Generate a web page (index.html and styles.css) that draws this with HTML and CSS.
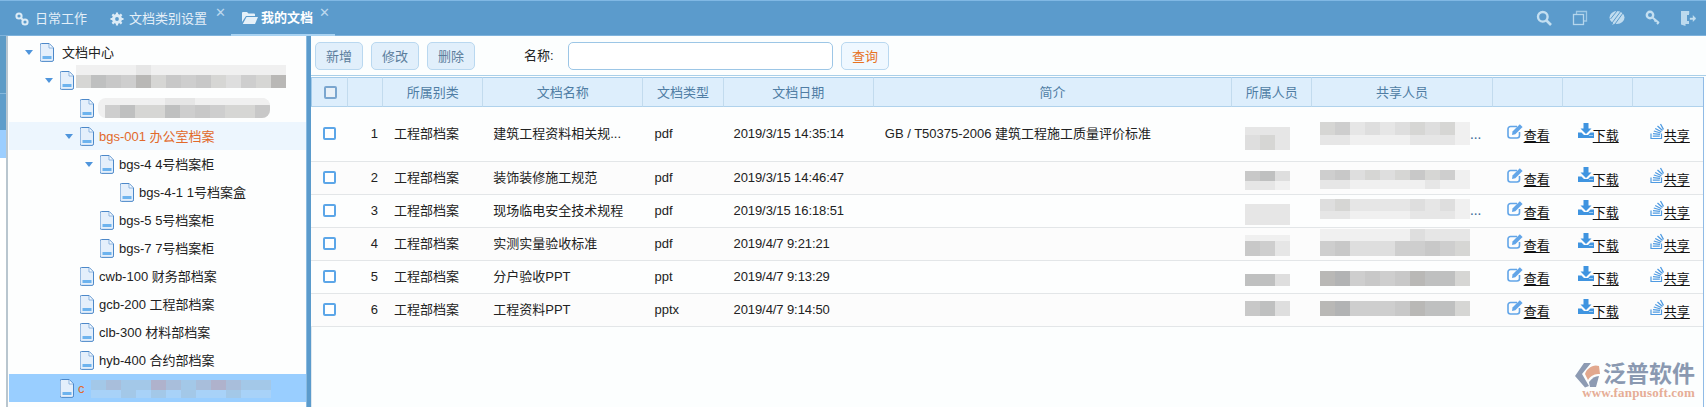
FILE: index.html
```html
<!DOCTYPE html>
<html lang="zh-CN">
<head>
<meta charset="utf-8">
<title>我的文档</title>
<link rel="stylesheet" href="styles.css">
</head>
<body>
<svg class="defs" aria-hidden="true">
  <symbol id="doc" viewBox="0 0 14 19">
    <path d="M1.5.5h7.7l4.3 4.4v12a1.5 1.5 0 0 1-1.5 1.5h-10.500a1.500 1.500 0 0 1-1.500-1.500v-14.900a1.500 1.500 0 0 1 1.500-1.500z" fill="#e4effb" stroke="#4c88c9"/>
    <path d="M9 1v4h4" fill="#f7fbff" stroke="#8db5e0"/>
    <rect x="2.500" y="13" width="9" height="3" fill="#6db3ee"/>
  </symbol>
  <symbol id="edit" viewBox="0 0 17 16">
    <path d="M12.500 9v3.500a2.500 2.500 0 0 1-2.500 2.500H3.500A2.500 2.500 0 0 1 1 12.500V6a2.500 2.500 0 0 1 2.500-2.500H10" fill="none" stroke="#62a5e8" stroke-width="1.600"/>
    <path d="M5.500 8.500 12.800 1.200l2.800 2.800-7.300 7.300-3.300.6z" fill="#62a5e8"/>
  </symbol>
  <symbol id="down" viewBox="0 0 16 15">
    <path d="M5.500 0h5v5.500h3L8 11 2.500 5.500h3z" fill="#3f94e0"/>
    <path d="M0 9.500h3.500L6 12h4l2.500-2.500H16V15H0z" fill="#3f94e0"/>
    <path d="M11.500 12.500h1M13.500 12.500h1" stroke="#fff"/>
  </symbol>
  <symbol id="share" viewBox="0 0 14 16">
    <path d="M1 10.500v5h10.500v-5" fill="none" stroke="#4f9be2" stroke-width="1.200"/>
    <path d="M2.800 13.200h7M3 10.600l7 .7M3.800 8l6.800 2M5.200 5.500l6.200 3.300M7.500 3l5 4.600M10.500 1l3 5.500" fill="none" stroke="#4f9be2" stroke-width="1.300"/>
  </symbol>
</svg>

<header class="topbar">
  <nav class="tabs">
    <div class="tab tab-first">
      <svg class="tab-icon" viewBox="0 0 14 14"><g fill="none" stroke="#dcebf6" stroke-width="2"><circle cx="4" cy="4" r="2.600"/><circle cx="10" cy="10" r="2.600"/><path d="M5.500 5.500l3 3"/></g></svg>
      <span>日常工作</span>
    </div>
    <div class="tab tab-second">
      <svg class="tab-icon" viewBox="0 0 14 14"><circle cx="7" cy="7" r="3.500" fill="none" stroke="#dcebf6" stroke-width="3"/><path d="M7 .5v13M.5 7h13M2.400 2.400l9.200 9.200M11.600 2.400l-9.200 9.200" stroke="#dcebf6" stroke-width="2.200"/><circle cx="7" cy="7" r="1.900" fill="#5b9bcc"/></svg>
      <span>文档类别设置</span>
      <span class="close">✕</span>
    </div>
    <div class="tab tab-active">
      <svg class="tab-icon tab-icon-wide" viewBox="0 0 16 13"><path d="M0 2a1 1 0 0 1 1-1h4l1.500 1.500H12a1 1 0 0 1 1 1V5H4L0 11z" fill="#e6f1f9"/><path d="M4.500 6H16l-3 7H0.800z" fill="#e6f1f9"/></svg>
      <span>我的文档</span>
      <span class="close">✕</span>
    </div>
  </nav>
  <div class="tools">
    <svg class="tool" viewBox="0 0 16 16"><circle cx="6.800" cy="6.800" r="4.800" fill="none" stroke="#c3dff1" stroke-width="2.400"/><path d="M10.500 10.500 15 15" stroke="#c3dff1" stroke-width="2.600"/></svg>
    <svg class="tool" viewBox="0 0 16 16"><path d="M4.500 4V1.500h10v9.500H11.500" fill="none" stroke="#9fc9e6" stroke-width="1.300"/><rect x="1.500" y="4.500" width="10" height="10" fill="none" stroke="#b5d6ec" stroke-width="1.300"/></svg>
    <svg class="tool tool-chat" viewBox="0 0 16 16"><ellipse cx="8" cy="7.500" rx="7.500" ry="6.500" fill="#c0dcef"/><path d="M3 15l2-3 2 1z" fill="#c0dcef"/><path d="M3 13 12 1M6 14l8-11M1.500 9 8 1" stroke="#5b9bcc" stroke-width="1"/></svg>
    <svg class="tool tool-key" viewBox="0 0 16 16"><circle cx="5" cy="5" r="3.200" fill="none" stroke="#c3dff1" stroke-width="2.400"/><path d="M7.500 7.500 14 13M11 10l-1.500 1.500M13.500 12.500 12 14" stroke="#c3dff1" stroke-width="2"/></svg>
    <svg class="tool" viewBox="0 0 16 16"><path d="M1 1h8v4H7v6h2v3H5.500v2L1 14.500z" fill="#bcdaee"/><path d="M9 1v3M10 8h3V5.500L16 8.500l-3 3V9.500h-3z" fill="#c3dff1" stroke="#c3dff1" stroke-width=".4"/></svg>
  </div>
</header>

<main class="layout">
  <div class="strip">
    <div class="strip-a"></div>
    <div class="strip-b"></div>
    <div class="strip-c"></div>
    <div class="strip-d"></div>
  </div>

  <aside class="tree">
    <div class="node l0"><i class="arrow"></i><svg class="doc"><use href="#doc"/></svg><span>文档中心</span></div>
    <div class="node l1"><i class="arrow"></i><svg class="doc"><use href="#doc"/></svg>
      <div class="mos tree-m1">
        <b class="tier h10"><i class="s0"></i><i class="s0"></i><i class="s0"></i><i class="s0"></i><i class="s1"></i><i class="s0"></i><i class="s0"></i><i class="s0"></i><i class="s0"></i><i class="s0"></i><i class="s0"></i><i class="s0"></i><i class="s0"></i><i class="s0"></i></b>
        <b class="tier h13"><i class="s3"></i><i class="s6"></i><i class="s5"></i><i class="s4"></i><i class="s7"></i><i class="s3"></i><i class="s5"></i><i class="s4"></i><i class="s5"></i><i class="s3"></i><i class="s2"></i><i class="s4"></i><i class="s3"></i><i class="s7"></i></b>
      </div>
    </div>
    <div class="node l2"><svg class="doc"><use href="#doc"/></svg>
      <div class="mos tree-m2">
        <b class="tier h7"><i class="s0"></i><i class="s0"></i><i class="s0"></i><i class="s0"></i><i class="s1"></i><i class="s1"></i><i class="s0"></i><i class="s0"></i><i class="s0"></i><i class="s0"></i><i class="s0"></i></b>
        <b class="tier h13"><i class="s4"></i><i class="s6"></i><i class="s3"></i><i class="s3"></i><i class="s6"></i><i class="s4"></i><i class="s5"></i><i class="s4"></i><i class="s3"></i><i class="s3"></i><i class="s5"></i></b>
      </div>
    </div>
    <div class="node l2 current"><i class="arrow"></i><svg class="doc"><use href="#doc"/></svg><span>bgs-001 办公室档案</span></div>
    <div class="node l3"><i class="arrow"></i><svg class="doc"><use href="#doc"/></svg><span>bgs-4 4号档案柜</span></div>
    <div class="node l4"><svg class="doc"><use href="#doc"/></svg><span>bgs-4-1 1号档案盒</span></div>
    <div class="node l3"><svg class="doc"><use href="#doc"/></svg><span>bgs-5 5号档案柜</span></div>
    <div class="node l3"><svg class="doc"><use href="#doc"/></svg><span>bgs-7 7号档案柜</span></div>
    <div class="node l2"><svg class="doc"><use href="#doc"/></svg><span>cwb-100 财务部档案</span></div>
    <div class="node l2"><svg class="doc"><use href="#doc"/></svg><span>gcb-200 工程部档案</span></div>
    <div class="node l2"><svg class="doc"><use href="#doc"/></svg><span>clb-300 材料部档案</span></div>
    <div class="node l2"><svg class="doc"><use href="#doc"/></svg><span>hyb-400 合约部档案</span></div>
    <div class="node l1 selected"><svg class="doc"><use href="#doc"/></svg><span class="cut">c</span>
      <div class="mos tree-m3">
        <b class="tier h10"><i class="b1"></i><i class="b2"></i><i class="b1"></i><i class="b1"></i><i class="b3"></i><i class="b2"></i><i class="b1"></i><i class="b2"></i><i class="b3"></i><i class="b2"></i><i class="b1"></i><i class="b1"></i></b>
        <b class="tier h8"><i class="b0"></i><i class="b0"></i><i class="b1"></i><i class="b0"></i><i class="b1"></i><i class="b0"></i><i class="b1"></i><i class="b0"></i><i class="b0"></i><i class="b1"></i><i class="b0"></i><i class="b0"></i></b>
      </div>
    </div>
  </aside>

  <div class="splitter"></div>

  <section class="content">
    <div class="toolbar">
      <button class="btn">新增</button>
      <button class="btn">修改</button>
      <button class="btn">删除</button>
      <label class="field-label" for="q">名称:</label>
      <input class="search" id="q" type="text">
      <button class="btn btn-query">查询</button>
    </div>
    <div class="grid-wrap">
      <table class="grid">
        <colgroup>
          <col class="c-check"><col class="c-no"><col class="c-cat"><col class="c-name"><col class="c-type"><col class="c-date"><col class="c-desc"><col class="c-owner"><col class="c-shared"><col class="c-act"><col class="c-act"><col class="c-act">
        </colgroup>
        <thead>
          <tr><th><i class="check check-head"></i></th><th></th><th>所属别类</th><th>文档名称</th><th>文档类型</th><th>文档日期</th><th>简介</th><th>所属人员</th><th>共享人员</th><th></th><th></th><th></th></tr>
        </thead>
        <tbody>
          <tr class="tall">
            <td class="mid"><i class="check"></i></td><td class="num">1</td><td>工程部档案</td><td class="tight">建筑工程资料相关规...</td><td>pdf</td><td class="date">2019/3/15 14:35:14</td><td>GB / T50375-2006 建筑工程施工质量评价标准</td>
            <td class="rel"><div class="mos own o1"><b class="tier h8"><i class="s1"></i><i class="s1"></i><i class="s1"></i></b><b class="tier h15"><i class="s2"></i><i class="s3"></i><i class="s1"></i></b></div></td>
            <td class="rel"><div class="mos shr w1"><b class="tier h13"><i class="s3"></i><i class="s4"></i><i class="s1"></i><i class="s2"></i><i class="s1"></i><i class="s2"></i><i class="s3"></i><i class="s2"></i><i class="s3"></i><i class="s0"></i></b><b class="tier h10"><i class="s1"></i><i class="s1"></i><i class="s0"></i><i class="s0"></i><i class="s0"></i><i class="s0"></i><i class="s1"></i><i class="s1"></i><i class="s1"></i><i class="s0"></i></b></div><em class="dots d1">...</em></td>
            <td class="act"><a><svg class="i-edit"><use href="#edit"/></svg><u>查看</u></a></td><td class="act"><a><svg class="i-down"><use href="#down"/></svg><u>下载</u></a></td><td class="act"><a><svg class="i-share"><use href="#share"/></svg><u>共享</u></a></td>
          </tr>
          <tr class="even">
            <td class="mid"><i class="check"></i></td><td class="num">2</td><td>工程部档案</td><td class="tight">装饰装修施工规范</td><td>pdf</td><td class="date">2019/3/15 14:46:47</td><td></td>
            <td class="rel"><div class="mos own o2"><b class="tier h10"><i class="s5"></i><i class="s6"></i><i class="s2"></i></b><b class="tier h9"><i class="s1"></i><i class="s1"></i><i class="s0"></i></b></div></td>
            <td class="rel"><div class="mos shr w2"><b class="tier h10"><i class="s4"></i><i class="s5"></i><i class="s2"></i><i class="s3"></i><i class="s2"></i><i class="s3"></i><i class="s5"></i><i class="s3"></i><i class="s4"></i><i class="s0"></i></b><b class="tier h9"><i class="s1"></i><i class="s1"></i><i class="s0"></i><i class="s0"></i><i class="s0"></i><i class="s0"></i><i class="s0"></i><i class="s1"></i><i class="s0"></i><i class="s0"></i></b></div></td>
            <td class="act"><a><svg class="i-edit"><use href="#edit"/></svg><u>查看</u></a></td><td class="act"><a><svg class="i-down"><use href="#down"/></svg><u>下载</u></a></td><td class="act"><a><svg class="i-share"><use href="#share"/></svg><u>共享</u></a></td>
          </tr>
          <tr>
            <td class="mid"><i class="check"></i></td><td class="num">3</td><td>工程部档案</td><td class="tight">现场临电安全技术规程</td><td>pdf</td><td class="date">2019/3/15 16:18:51</td><td></td>
            <td class="rel"><div class="mos own o3"><b class="tier h21"><i class="s1"></i><i class="s1"></i><i class="s1"></i></b></div></td>
            <td class="rel"><div class="mos shr w3"><b class="tier h12"><i class="s2"></i><i class="s3"></i><i class="s1"></i><i class="s1"></i><i class="s1"></i><i class="s1"></i><i class="s2"></i><i class="s1"></i><i class="s2"></i><i class="s0"></i></b><b class="tier h8"><i class="s1"></i><i class="s1"></i><i class="s0"></i><i class="s0"></i><i class="s0"></i><i class="s0"></i><i class="s1"></i><i class="s1"></i><i class="s1"></i><i class="s0"></i></b></div><em class="dots d3">...</em></td>
            <td class="act"><a><svg class="i-edit"><use href="#edit"/></svg><u>查看</u></a></td><td class="act"><a><svg class="i-down"><use href="#down"/></svg><u>下载</u></a></td><td class="act"><a><svg class="i-share"><use href="#share"/></svg><u>共享</u></a></td>
          </tr>
          <tr class="even">
            <td class="mid"><i class="check"></i></td><td class="num">4</td><td>工程部档案</td><td class="tight">实测实量验收标准</td><td>pdf</td><td class="date">2019/4/7 9:21:21</td><td></td>
            <td class="rel"><div class="mos own o4"><b class="tier h6"><i class="s0"></i><i class="s0"></i><i class="s0"></i></b><b class="tier h15"><i class="s5"></i><i class="s4"></i><i class="s1"></i></b></div></td>
            <td class="rel"><div class="mos shr w4"><b class="tier h12"><i class="s0"></i><i class="s0"></i><i class="s0"></i><i class="s0"></i><i class="s0"></i><i class="s0"></i><i class="s2"></i><i class="s1"></i><i class="s1"></i><i class="s1"></i></b><b class="tier h15"><i class="s4"></i><i class="s5"></i><i class="s2"></i><i class="s2"></i><i class="s2"></i><i class="s4"></i><i class="s4"></i><i class="s5"></i><i class="s4"></i><i class="s3"></i></b></div></td>
            <td class="act"><a><svg class="i-edit"><use href="#edit"/></svg><u>查看</u></a></td><td class="act"><a><svg class="i-down"><use href="#down"/></svg><u>下载</u></a></td><td class="act"><a><svg class="i-share"><use href="#share"/></svg><u>共享</u></a></td>
          </tr>
          <tr>
            <td class="mid"><i class="check"></i></td><td class="num">5</td><td>工程部档案</td><td class="tight">分户验收PPT</td><td>ppt</td><td class="date">2019/4/7 9:13:29</td><td></td>
            <td class="rel"><div class="mos own o5"><b class="tier h12"><i class="s6"></i><i class="s6"></i><i class="s2"></i></b></div></td>
            <td class="rel"><div class="mos shr w5"><b class="tier h15"><i class="s7"></i><i class="s8"></i><i class="s4"></i><i class="s5"></i><i class="s4"></i><i class="s5"></i><i class="s7"></i><i class="s6"></i><i class="s6"></i><i class="s3"></i></b></div></td>
            <td class="act"><a><svg class="i-edit"><use href="#edit"/></svg><u>查看</u></a></td><td class="act"><a><svg class="i-down"><use href="#down"/></svg><u>下载</u></a></td><td class="act"><a><svg class="i-share"><use href="#share"/></svg><u>共享</u></a></td>
          </tr>
          <tr class="even">
            <td class="mid"><i class="check"></i></td><td class="num">6</td><td>工程部档案</td><td class="tight">工程资料PPT</td><td>pptx</td><td class="date">2019/4/7 9:14:50</td><td></td>
            <td class="rel"><div class="mos own o6"><b class="tier h15"><i class="s5"></i><i class="s6"></i><i class="s2"></i></b></div></td>
            <td class="rel"><div class="mos shr w6"><b class="tier h15"><i class="s7"></i><i class="s8"></i><i class="s4"></i><i class="s4"></i><i class="s4"></i><i class="s5"></i><i class="s7"></i><i class="s6"></i><i class="s6"></i><i class="s3"></i></b></div></td>
            <td class="act"><a><svg class="i-edit"><use href="#edit"/></svg><u>查看</u></a></td><td class="act"><a><svg class="i-down"><use href="#down"/></svg><u>下载</u></a></td><td class="act"><a><svg class="i-share"><use href="#share"/></svg><u>共享</u></a></td>
          </tr>
        </tbody>
      </table>
      <div class="watermark">
        <svg class="wm-icon" viewBox="0 0 26 25"><path d="M9 0h7L7 11l7 12-4 1.500L0 13z" fill="#8d9bb3"/><path d="M10 11C12 5 18 1 24 3l1 8c-5 0-9 1-12 6z" fill="#e2a88e"/><path d="M14 19c3-4 6-6 10-6l-3 11h-6z" fill="#8d9bb3"/></svg>
        <div class="wm-text">
          <strong>泛普软件</strong>
          <small>www.fanpusoft.com</small>
        </div>
      </div>
    </div>
  </section>
</main>
</body>
</html>
```

FILE: styles.css
```css
* { box-sizing: border-box; }
html, body { margin: 0; padding: 0; }
body {
  width: 1706px;
  height: 407px;
  overflow: hidden;
  background: #fcfefe;
  color: #222;
  font: 13px/1 "Liberation Sans", "Noto Sans CJK SC", sans-serif;
}
.defs { position: absolute; width: 0; height: 0; }

/* top bar */
.topbar {
  height: 36px;
  display: flex;
  justify-content: space-between;
  align-items: center;
  background: #5b9bcc;
  border-top: 1px solid #80b8e4;
  border-bottom: 1px solid #7fb3dc;
}
.tabs { display: flex; height: 100%; }
.tab {
  display: flex;
  align-items: center;
  position: relative;
  color: #e4eff8;
  height: 36px;
  margin-top: -1px;
  padding-top: 1px;
}
.tab-first { width: 102px; padding-left: 15px; }
.tab-second { width: 129px; padding-left: 8px; }
.tab-active {
  width: 104px;
  padding-left: 11px;
  color: #fff;
  font-weight: 700;
  border-bottom: 2px solid #a9d3f2;
}
.tab-icon { width: 14px; height: 14px; margin-right: 6px; flex: none; }
.tab-second .tab-icon { margin-right: 5px; }
.tab-icon-wide { width: 16px; height: 13px; margin-right: 3px; }
.close {
  position: absolute;
  top: 6px;
  right: 5px;
  font-size: 13px;
  font-weight: 400;
  color: #bcd8ee;
}
.tools { display: flex; gap: 20px; padding-right: 10px; }
.tool { width: 16px; height: 16px; display: block; }
.tool-chat { margin-left: 1px; }
.tool-key { margin-right: -1px; }

/* layout */
.layout { display: flex; height: 371px; }
.strip {
  width: 8px;
  flex: none;
  display: flex;
  flex-direction: column;
  border-right: 2px solid #b9c6cf;
}
.strip-a { height: 58px; background: #5d9bc6; border-bottom: 1px solid #86b8dc; }
.strip-b { height: 36px; background: #5f9dca; }
.strip-c { height: 28px; background: #9bceff; }
.strip-d { flex: 1; background: #fff; }

/* tree */
.tree {
  width: 298px;
  flex: none;
  padding-top: 2px;
  padding-left: 1px;
  background: #fdfefe;
}
.node {
  height: 28px;
  display: flex;
  align-items: center;
  position: relative;
  color: #222;
}
.l0 { padding-left: 31px; }
.l1 { padding-left: 51px; }
.l2 { padding-left: 71px; }
.l3 { padding-left: 91px; }
.l4 { padding-left: 111px; }
.current { background: #edf6fe; color: #e2692a; }
.selected { background: #99ceff; }
.cut { color: #e2692a; margin-left: -1px; }
.doc { width: 14px; height: 19px; margin-right: 5px; flex: none; }
.l0 .doc { margin-right: 8px; }
.arrow {
  position: absolute;
  margin-left: -15px;
  width: 0;
  height: 0;
  border-left: 4px solid transparent;
  border-right: 4px solid transparent;
  border-top: 5px solid #4f95dc;
}
.l0 .arrow { left: 31px; }
.l1 .arrow { left: 51px; }
.l2 .arrow { left: 71px; }
.l3 .arrow { left: 91px; }

/* mosaics: the blurred-out parts of the screenshot */
.mos {
  position: absolute;
  display: flex;
  flex-direction: column;
  font-style: normal;
  background: #fff;
}
.tier { display: flex; }
.tier i { width: 15px; display: block; }
.h6 { height: 6px; } .h7 { height: 7px; } .h8 { height: 8px; } .h9 { height: 9px; }
.h10 { height: 10px; } .h12 { height: 12px; } .h13 { height: 13px; }
.h15 { height: 15px; } .h21 { height: 21px; }
.s0 { background: #f0f0f0; } .s1 { background: #e6e6e6; } .s2 { background: #dedede; }
.s3 { background: #d6d6d4; } .s4 { background: #cecece; } .s5 { background: #c8c8c8; }
.s6 { background: #bfc0c0; } .s7 { background: #b9b8b6; } .s8 { background: #b2b3b4; }
.b0 { background: #a8d2f8; } .b1 { background: #a3c8e8; } .b2 { background: #a8bedb; } .b3 { background: #afb2cc; }
.tree-m1 { left: 67px; top: -1px; border-radius: 6px 0 0 12px; }
.tree-m2 { left: 89px; top: 4px; padding-left: 7px; background: #f0f0f0; border-radius: 8px; overflow: hidden; }
.tree-m3 { left: 82px; top: 6px; background: transparent; }

/* content */
.splitter {
  width: 5px;
  flex: none;
  background: #5b9bcc;
  border-left: 1px solid #8bbbe0;
}
.content { flex: 1; min-width: 0; }
.toolbar {
  height: 40px;
  display: flex;
  align-items: flex-start;
  padding: 6px 0 0 4px;
  border-bottom: 1px solid #a9cfe8;
}
.btn {
  width: 48px;
  height: 28px;
  margin-right: 8px;
  padding: 0;
  font: inherit;
  color: #5b7d9c;
  background: #e1effb;
  border: 1px solid #b9d8f0;
  border-radius: 5px;
}
.btn-query { color: #e8721f; background: #eff8ff; margin: 0; }
.field-label { width: 85px; padding: 7px 0 0 41px; line-height: 14px; color: #222; white-space: nowrap; }
.search {
  width: 265px;
  height: 28px;
  margin-right: 8px;
  background: #fff;
  border: 1px solid #9cc6e6;
  border-radius: 5px;
  outline: 0;
}
.grid-wrap {
  position: relative;
  height: 330px;
  margin-top: 1px;
  width: 1393px;
  border-right: 1px solid #8fbae6;
  border-left: 1px solid #dfe8ee;
}
.grid {
  border-collapse: separate;
  border-spacing: 0;
  table-layout: fixed;
  width: 1392px;
  margin-left: -1px;
}
.c-check { width: 37px; }
.c-no { width: 35px; }
.c-cat { width: 100px; }
.c-name { width: 160px; }
.c-type { width: 80px; }
.c-date { width: 150px; }
.c-desc { width: 358px; }
.c-owner { width: 80px; }
.c-shared { width: 180px; }
.c-act { width: 70px; }
.grid th {
  height: 30px;
  padding: 0;
  font-weight: 400;
  color: #4f7da4;
  text-align: center;
  background: #ddeefc;
  border-top: 1px solid #a3cbea;
  border-bottom: 1px solid #b0d2ec;
  border-right: 1px solid #c2dbee;
}
.grid th:first-child { border-left: 1px solid #a3cbea; }
.grid th:last-child { border-right: 0; }
.grid td {
  height: 33px;
  padding: 0 0 2px 11px;
  white-space: nowrap;
  border-bottom: 1px solid #e3e6e8;
  background: #fdfefe;
}
.grid .tall td { height: 55px; }
.grid .even td { background: #fcfcfc; }
.grid td.mid { padding: 0 0 2px 12px; }
.grid td.num { padding: 0 5px 2px 0; text-align: right; }
.grid td.tight { padding-left: 10px; }
.grid td.date { padding-left: 10px; letter-spacing: -.09px; }
.grid td.rel { position: relative; padding: 0; }
.check {
  display: block;
  width: 13px;
  height: 13px;
  background: #fff;
  border: 2px solid #5ca6e8;
  border-radius: 2px;
}
.check-head { margin-left: 12px; background: #e9f1f8; border-color: #7aa6cf; }

.own { left: 13px; }
.shr { left: 8px; }
.o1 { top: 20px; } .o2 { top: 9px; } .o3 { top: 9px; } .o4 { top: 7px; } .o5 { top: 13px; } .o6 { top: 7px; }
.w1 { top: 15px; } .w2 { top: 8px; } .w3 { top: 4px; } .w4 { top: 1px; } .w5 { top: 10px; } .w6 { top: 7px; }
.dots {
  position: absolute;
  left: 158px;
  font: 700 10px/1 "Liberation Sans", sans-serif;
  letter-spacing: 1px;
  color: #44709a;
}
.d1 { top: 24px; } .d3 { top: 12px; }
.grid td.act { padding: 0 0 0 15px; }
.grid td.act:nth-last-child(3) { padding-left: 14px; }
.grid td.act:last-child { padding-left: 17px; }
.act a { display: inline-flex; align-items: flex-start; color: #111; }
.act u { margin-top: 3px; line-height: 16px; text-decoration: underline; text-underline-offset: 2px; }
.i-edit { width: 17px; height: 16px; margin-top: -2px; }
.i-down { width: 16px; height: 15px; margin: -2px -1px 0 0; }
.i-share { width: 14px; height: 16px; margin-top: -2px; }

.watermark {
  position: absolute;
  right: 8px;
  bottom: 8px;
  display: flex;
}
.wm-icon { width: 26px; height: 25px; flex: none; position: absolute; left: -28px; top: 1px; }
.wm-text { display: flex; flex-direction: column; align-items: flex-end; }
.wm-text strong {
  margin-bottom: -1px;
  font-size: 23px;
  line-height: 25px;
  font-weight: 700;
  letter-spacing: 0;
  color: #8a99b1;
}
.wm-text small {
  margin-left: -26px;
  font: 700 13px/13px "Liberation Serif", serif;
  letter-spacing: .18px;
  color: #e6ad96;
  white-space: nowrap;
}
```
